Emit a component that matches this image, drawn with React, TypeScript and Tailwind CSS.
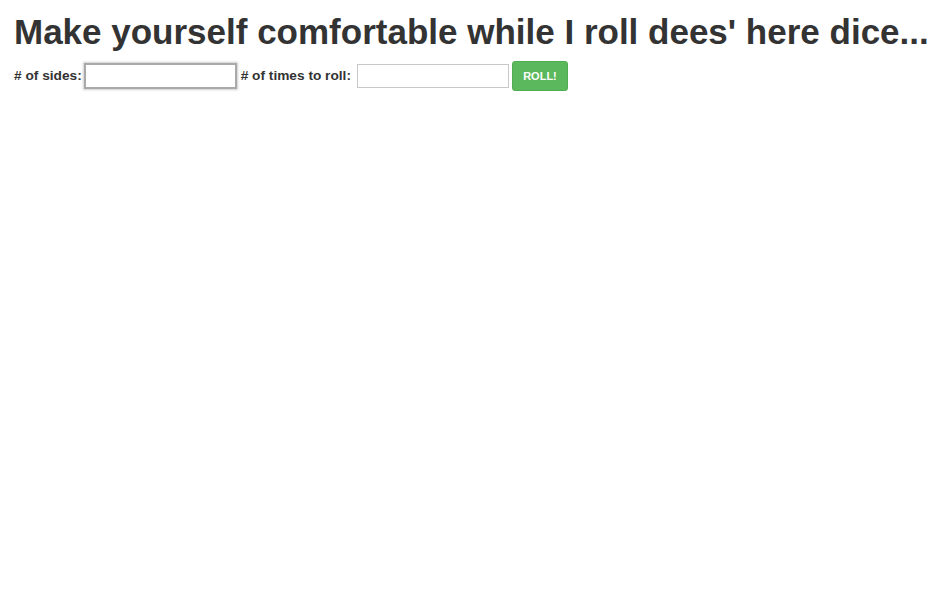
import React from 'react';

const App = () => {
  return (
    <div className="min-h-screen bg-white px-[14px] text-[#333]" style={{ fontFamily: '"Liberation Sans", Arial, sans-serif' }}>
      <h1 className="whitespace-nowrap pt-[12px] text-[35px] font-bold leading-[40px]">
        Make yourself comfortable while I roll dees' here dice...
      </h1>
      <form className="mt-[9px] flex items-center text-[13.7px] font-bold" onSubmit={(e) => e.preventDefault()}>
        <label className="mr-[2px]"># of sides:</label>
        <input
          type="text"
          autoFocus
          className="h-[26px] w-[153px] border-2 border-[#a9a9a9] bg-white px-[2px] shadow-[0_0_2px_1px_#cfcfcf] outline-none"
        />
        <label className="ml-[4px] mr-[6px]"># of times to roll:</label>
        <input
          type="text"
          className="h-[24px] w-[152px] border border-[#c8c8c8] bg-white px-[2px] outline-none"
        />
        <button
          type="submit"
          className="ml-[3px] h-[30px] w-[56px] rounded-[3px] border border-[#4cae4c] bg-[#5cb85c] text-[11px] font-bold text-white"
        >
          ROLL!
        </button>
      </form>
    </div>
  );
};

export default App;
